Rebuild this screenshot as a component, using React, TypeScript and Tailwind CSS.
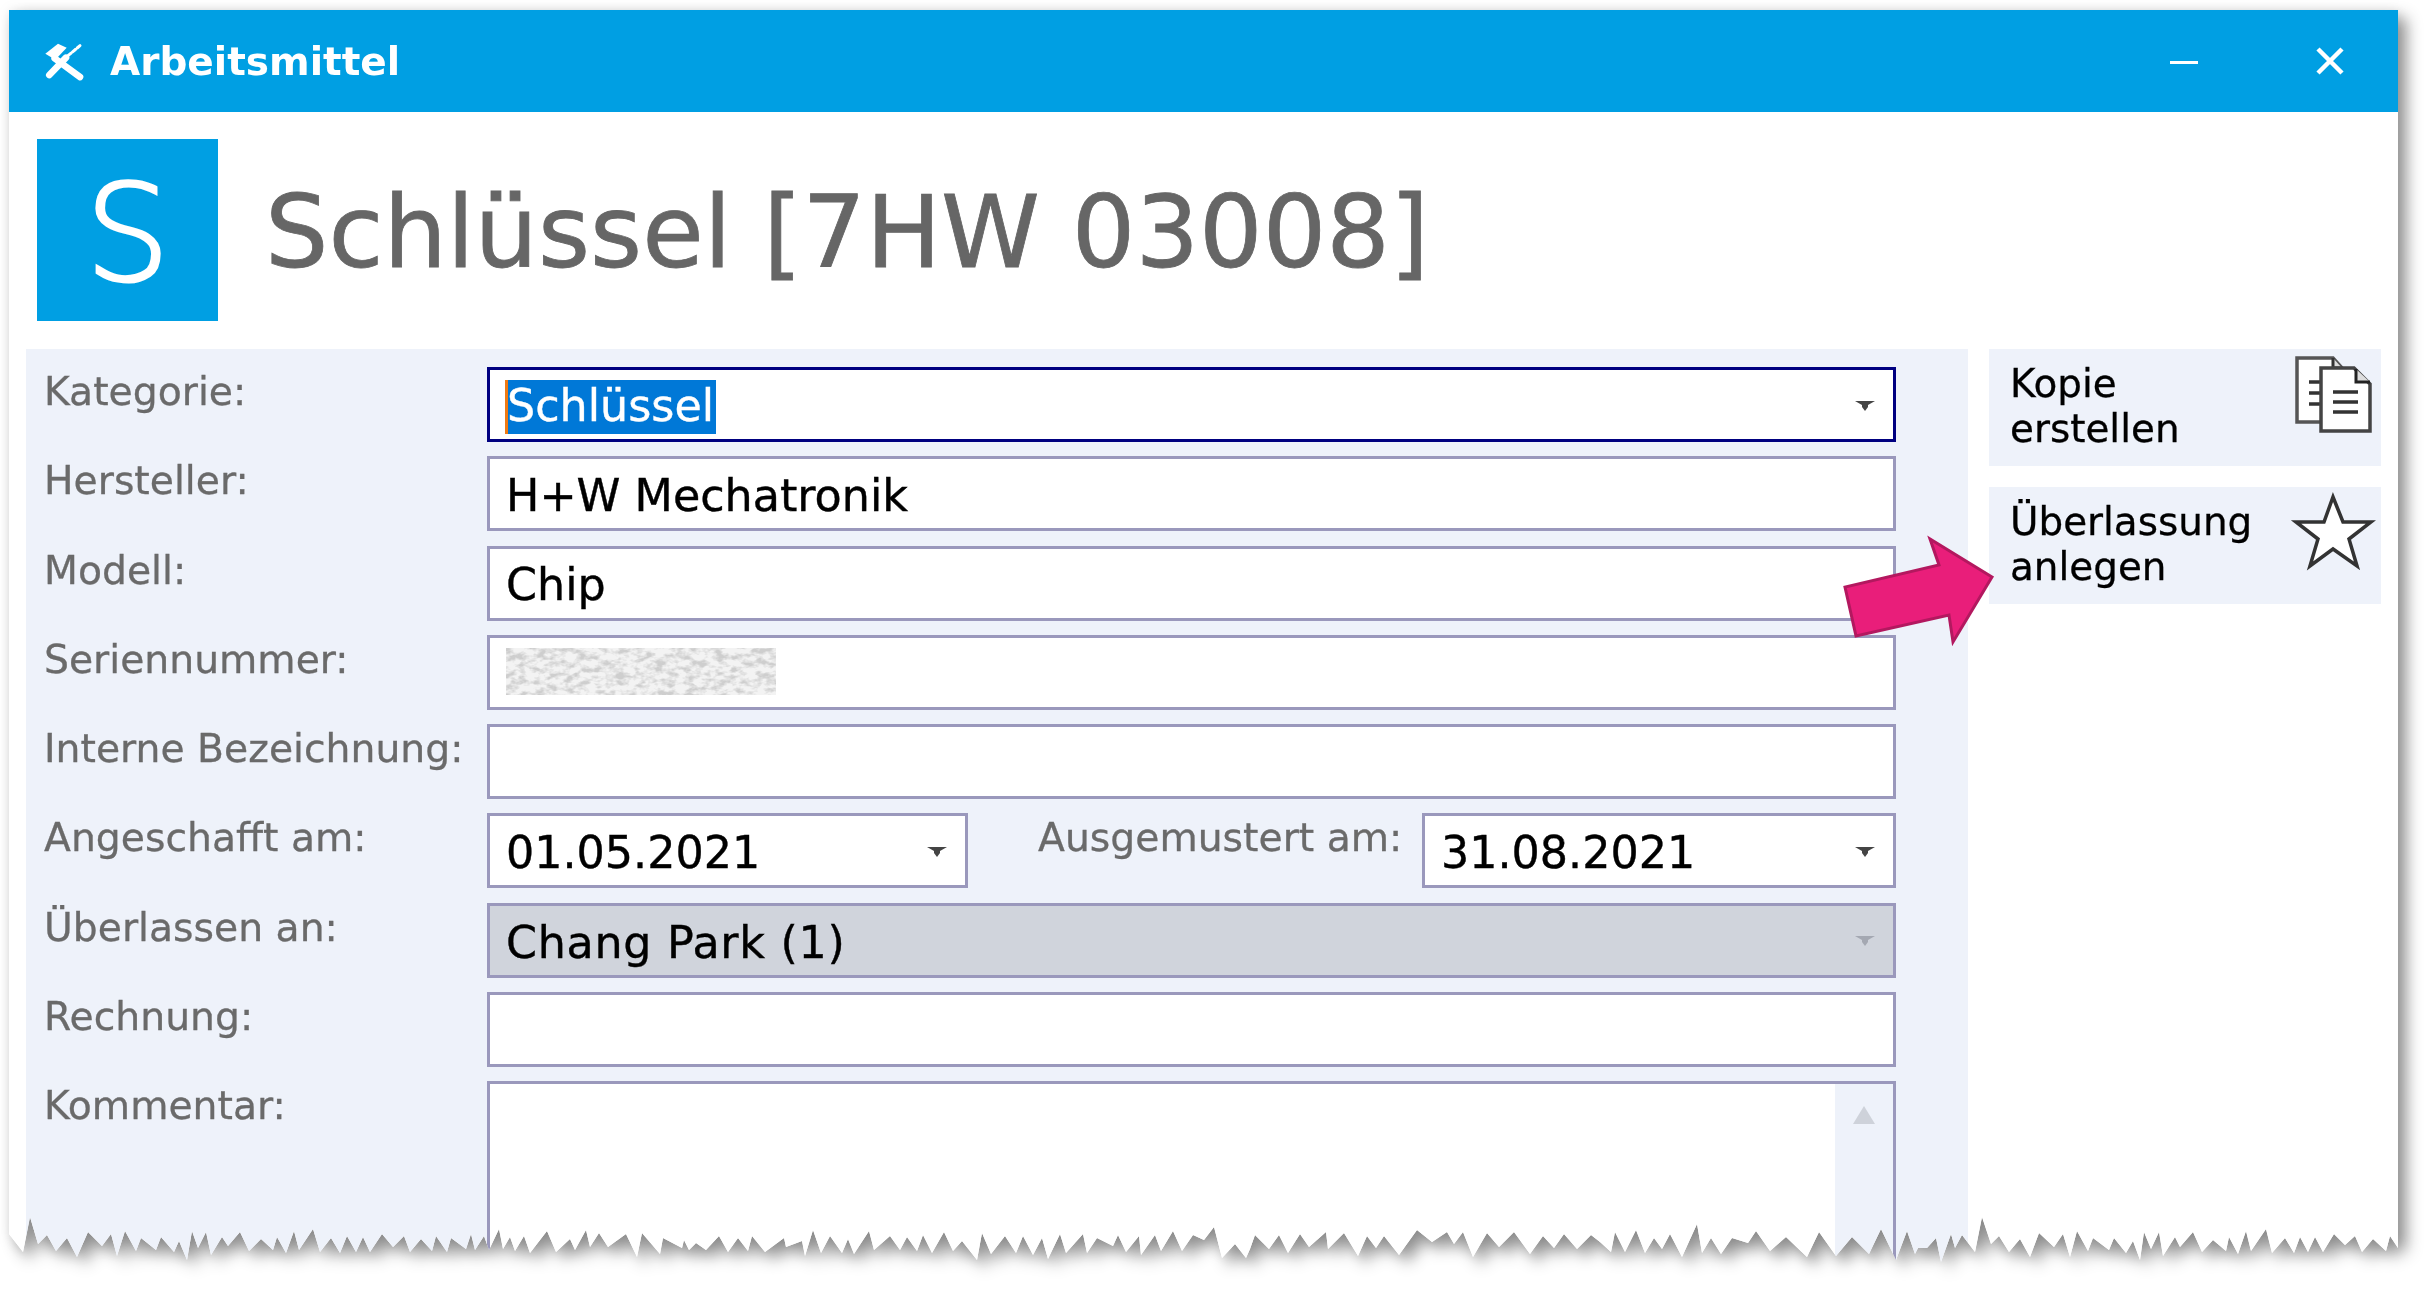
import React from "react";

const FONT = "font-['DejaVu_Sans','Liberation_Sans',sans-serif]";

const JAG: [number, number][] = [
  [9,1234],[23,1252],[30,1217],[38,1244],[47,1235],[56,1251],[67,1238],[77,1257],[88,1232],[102,1246],[111,1234],[117,1256],[125,1231],[136,1251],[141,1238],[156,1250],[161,1237],[174,1252],[179,1241],[187,1260],[192,1231],[198,1248],[206,1232],[211,1255],[222,1237],[228,1246],[240,1232],[249,1251],[261,1239],[273,1250],[277,1237],[286,1253],[294,1231],[299,1250],
  [313,1229],[320,1252],[331,1238],[340,1253],[347,1236],[356,1252],[363,1237],[370,1252],[382,1234],[393,1247],[404,1236],[410,1252],[421,1239],[432,1251],[436,1236],[447,1252],[451,1238],[466,1249],[471,1234],[475,1250],[484,1236],[489,1250],[499,1229],[503,1249],[510,1237],[515,1251],[524,1236],[530,1253],[547,1231],[556,1252],[570,1239],[575,1250],[586,1230],[590,1247],[599,1233],[608,1247],[626,1234],[637,1257],[642,1233],[660,1254],[663,1238],[682,1248],[684,1240],[689,1250],[696,1243],[706,1250],[719,1236],[728,1252],[738,1238],[748,1251],[752,1236],[765,1252],[784,1238],[786,1247],[802,1241],[805,1256],[813,1230],[821,1253],[830,1236],[842,1253],[848,1239],[854,1254],[869,1231],[874,1250],[890,1236],[900,1250],
  [907,1237],[917,1251],[923,1235],[932,1253],[944,1232],[953,1251],[962,1241],[977,1260],[982,1233],[991,1254],[1005,1236],[1016,1253],[1023,1236],[1033,1255],[1042,1238],[1048,1259],[1060,1234],[1066,1253],[1083,1234],[1087,1253],[1097,1238],[1113,1246],[1118,1235],[1126,1252],[1139,1236],[1141,1255],[1155,1235],[1161,1251],[1173,1231],[1182,1251],[1193,1235],[1204,1240],[1214,1227],[1222,1258],[1235,1244],[1246,1258],[1250,1249],
  [1255,1235],[1269,1249],[1279,1235],[1288,1253],[1300,1234],[1309,1247],[1326,1232],[1328,1249],[1344,1233],[1358,1256],[1367,1236],[1376,1248],[1384,1236],[1399,1255],[1417,1230],[1432,1242],[1447,1232],[1454,1244],[1463,1232],[1473,1257],[1487,1233],[1499,1247],[1514,1232],[1530,1254],[1543,1236],[1554,1248],[1564,1234],[1577,1249],[1591,1235],
  [1600,1242],[1611,1252],[1615,1232],[1625,1252],[1636,1230],[1645,1253],[1654,1238],[1662,1249],[1670,1234],[1682,1257],[1697,1224],[1702,1253],[1711,1238],[1721,1254],[1732,1238],[1748,1243],[1756,1231],[1770,1251],[1786,1237],[1807,1257],[1819,1232],[1836,1256],[1852,1237],[1869,1254],[1881,1229],[1896,1260],[1907,1231],[1915,1254],[1918,1248],[1927,1248],[1936,1238],[1941,1262],[1951,1234],[1955,1248],[1962,1235],[1975,1252],[1982,1217],[1991,1244],[1999,1236],[2009,1252],[2020,1239],[2030,1257],[2039,1233],[2054,1247],[2063,1234],[2070,1257],[2077,1231],[2088,1251],[2093,1238],[2109,1250],[2114,1238],[2126,1253],[2133,1241],[2140,1260],[2144,1232],[2151,1249],[2159,1232],[2163,1256],[2175,1237],[2180,1247],[2193,1232],[2202,1252],[2213,1240],[2226,1251],[2229,1237],[2238,1254],[2246,1231],[2251,1251],[2266,1229],[2272,1253],[2285,1238],[2294,1253],[2300,1237],[2308,1252],[2315,1237],[2323,1252],[2334,1234],[2345,1245],[2355,1236],[2362,1252],[2373,1239],[2386,1251],[2390,1236],[2398,1248],
];

const clip =
  "polygon(0px 0px, 2389px 0px, " +
  [...JAG].reverse().map(([x, y]) => `${x - 9}px ${y - 10}px`).join(", ") +
  ")";

function Caret({ color = "#444" }: { color?: string }) {
  return (
    <svg width="20" height="12" viewBox="0 0 20 12" className="mt-[2px] shrink-0">
      <path d="M0 1H20L13 5V7L10 11L7 7V5Z" fill={color} />
    </svg>
  );
}

function Field({
  children,
  className = "",
  focus,
  disabled,
  caret,
}: {
  children?: React.ReactNode;
  className?: string;
  focus?: boolean;
  disabled?: boolean;
  caret?: boolean;
}) {
  return (
    <div
      className={`flex h-[75px] items-center justify-between border-[3px] pl-[16px] pr-[18px] text-[44.4px] leading-none text-black [-webkit-text-stroke:0.4px_#000] ${
        focus ? "border-[#000080]" : "border-[#9a98bc]"
      } ${disabled ? "bg-[#d0d4dc]" : "bg-white"} ${className}`}
    >
      <div className="flex min-w-0 items-center pt-[5px]">{children}</div>
      {caret && <Caret color={disabled ? "#a4a8b2" : "#444"} />}
    </div>
  );
}

function Row({ label, children }: { label: string; children: React.ReactNode }) {
  return (
    <div className="flex">
      <div className="w-[461px] shrink-0 whitespace-nowrap pl-[18px] pt-[3px] text-[39.3px] leading-[44px] text-[#6a6a6a] [-webkit-text-stroke:0.3px_#6a6a6a]">
        {label}
      </div>
      <div className="w-[1409px] shrink-0">{children}</div>
    </div>
  );
}

function ToolsIcon() {
  return (
    <svg width="60" height="60" viewBox="0 0 180 180" className="shrink-0">
      <path d="M46 68L84 38L110 50L76 86Z" fill="#fff" />
      <path d="M74 82L150 138" stroke="#fff" strokeWidth="20" strokeLinecap="round" />
      <path d="M108 80L58 132" stroke="#fff" strokeWidth="20" strokeLinecap="round" />
      <path d="M114 74L150 44" stroke="#fff" strokeWidth="9" strokeDasharray="12 6" strokeLinecap="round" />
    </svg>
  );
}

function CopyIcon() {
  return (
    <svg width="86" height="84" viewBox="2290 352 86 84" className="shrink-0">
      <path d="M2297 358H2333L2342 368V422H2297Z" fill="#fff" stroke="#555" strokeWidth="3.5" />
      <path d="M2333 358V368H2342" fill="#ddd" stroke="#333" strokeWidth="3" />
      <path d="M2309 382H2324M2309 393H2324M2309 404H2324" stroke="#333" strokeWidth="3.5" />
      <path d="M2321 368H2354L2370 384V431H2321Z" fill="#fff" stroke="#444" strokeWidth="3.5" />
      <path d="M2356 369V382H2370" fill="#ddd" stroke="#222" strokeWidth="3" />
      <path d="M2333 392H2358M2333 402H2358M2333 412H2358" stroke="#333" strokeWidth="3.5" />
    </svg>
  );
}

function StarIcon() {
  return (
    <svg width="86" height="84" viewBox="2290 490 86 84" className="shrink-0">
      <path
        d="M2333 497L2343 522H2371L2349 539L2357 566L2333 549L2310 566L2318 539L2296 522H2324Z"
        fill="#fff"
        stroke="#333"
        strokeWidth="3.5"
        strokeLinejoin="miter"
      />
    </svg>
  );
}

function SideButton({ lines, icon }: { lines: string[]; icon: React.ReactNode }) {
  return (
    <div className="flex h-[117px] items-start justify-between bg-[#eef2fa] pl-[21px] pr-[5px] pt-[3px]">
      <div className="pt-[9px] text-[38.9px] leading-[45px] text-black [-webkit-text-stroke:0.3px_#000]">
        {lines.map((l) => (
          <div key={l}>{l}</div>
        ))}
      </div>
      {icon}
    </div>
  );
}

function Smudge() {
  return (
    <svg width="270" height="47" viewBox="0 0 270 47" className="block -translate-y-[3px]">
      <defs>
        <filter id="smudge" x="0" y="0" width="100%" height="100%">
          <feTurbulence type="fractalNoise" baseFrequency="0.1 0.16" numOctaves="3" seed="11" />
          <feColorMatrix values="0 0 0 0 0.62  0 0 0 0 0.62  0 0 0 0 0.62  3.4 0 0 0 -1.4" />
        </filter>
      </defs>
      <rect width="270" height="47" fill="#f3f3f3" />
      <rect width="270" height="47" filter="url(#smudge)" />
    </svg>
  );
}

export default function App() {
  return (
    <div className={`h-[1292px] w-[2427px] overflow-hidden bg-white pl-[9px] pt-[10px] ${FONT}`}>
      <div className="h-[1252px] w-[2389px] [filter:drop-shadow(8px_8px_8px_rgba(0,0,0,0.42))_drop-shadow(0px_0px_6px_rgba(0,0,0,0.08))]">
        <div className="h-[1252px] w-[2389px] bg-white" style={{ clipPath: clip }}>
          <div className="relative flex h-[1252px] w-[2389px] flex-col bg-white blur-[0.7px]">
            <div className="flex h-[102px] shrink-0 items-center bg-[#009fe3] pl-[21px]">
              <ToolsIcon />
              <span className="ml-[20px] text-[39px] font-bold leading-none text-white">Arbeitsmittel</span>
              <div className="ml-auto mr-[52px] flex items-center gap-[116px]">
                <div className="mt-[2px] h-[3px] w-[28px] bg-white" />
                <svg width="32" height="32" viewBox="0 0 32 32">
                  <path d="M4 4L28 28M28 4L4 28" stroke="#fff" strokeWidth="4.5" />
                </svg>
              </div>
            </div>

            <div className="flex shrink-0 items-center pl-[28px] pt-[27px]">
              <div className="flex h-[182px] w-[181px] items-center justify-center bg-[#009fe3] pt-[8px] text-[134px] font-extralight leading-none text-white [-webkit-text-stroke:3px_#fff]">
                S
              </div>
              <h1 className="ml-[47px] whitespace-nowrap pt-[6px] text-[100px] font-normal leading-none text-[#666] [-webkit-text-stroke:0.8px_#666]">
                Schlüssel [7HW 03008]
              </h1>
            </div>

            <div className="mt-[28px] flex min-h-0 flex-1 px-[17px]">
              <div className="flex w-[1942px] shrink-0 flex-col gap-[14.3px] overflow-hidden bg-[#eef2fa] pt-[18px]">
                <Row label="Kategorie:">
                  <Field focus caret>
                    <span className="relative -ml-[1px] bg-[#0078d7] px-[2px] pb-[6px] pt-[4px] text-white [-webkit-text-stroke:0.4px_#fff]">
                      <span className="absolute left-0 top-0 h-full w-[3px] bg-[#f07a13]" />
                      Schlüssel
                    </span>
                  </Field>
                </Row>
                <Row label="Hersteller:">
                  <Field>H+W Mechatronik</Field>
                </Row>
                <Row label="Modell:">
                  <Field>Chip</Field>
                </Row>
                <Row label="Seriennummer:">
                  <Field>
                    <Smudge />
                  </Field>
                </Row>
                <Row label="Interne Bezeichnung:">
                  <Field />
                </Row>
                <Row label="Angeschafft am:">
                  <div className="flex items-start">
                    <Field caret className="w-[481px] shrink-0">
                      01.05.2021
                    </Field>
                    <div className="w-[454px] shrink-0 whitespace-nowrap pl-[70px] pt-[3px] text-[39.3px] leading-[44px] text-[#6a6a6a] [-webkit-text-stroke:0.3px_#6a6a6a]">
                      Ausgemustert am:
                    </div>
                    <Field caret className="w-[474px] shrink-0">
                      31.08.2021
                    </Field>
                  </div>
                </Row>
                <Row label="Überlassen an:">
                  <Field disabled caret>
                    <span className="tracking-[0.7px]">Chang Park (1)</span>
                  </Field>
                </Row>
                <Row label="Rechnung:">
                  <Field />
                </Row>
                <Row label="Kommentar:">
                  <div className="flex h-[300px] justify-end border-[3px] border-[#9a98bc] bg-white">
                    <div className="flex w-[58px] justify-center bg-[#eef2fa] pt-[22px]">
                      <svg width="22" height="18" viewBox="0 0 22 18">
                        <path d="M11 0L22 18H0Z" fill="#ced2da" />
                      </svg>
                    </div>
                  </div>
                </Row>
              </div>

              <div className="ml-[21px] flex w-[392px] shrink-0 flex-col gap-[21px]">
                <SideButton lines={["Kopie", "erstellen"]} icon={<CopyIcon />} />
                <SideButton lines={["Überlassung", "anlegen"]} icon={<StarIcon />} />
              </div>
            </div>

            <svg
              width="170"
              height="130"
              viewBox="1835 530 170 130"
              className="absolute left-[1826px] top-[520px]"
            >
              <path
                d="M1992 577L1930 539L1939 565L1845 587L1856 636L1949 615L1953 642Z"
                fill="#e91e7a"
                stroke="#b3185f"
                strokeWidth="3"
              />
            </svg>
          </div>
        </div>
      </div>
    </div>
  );
}
